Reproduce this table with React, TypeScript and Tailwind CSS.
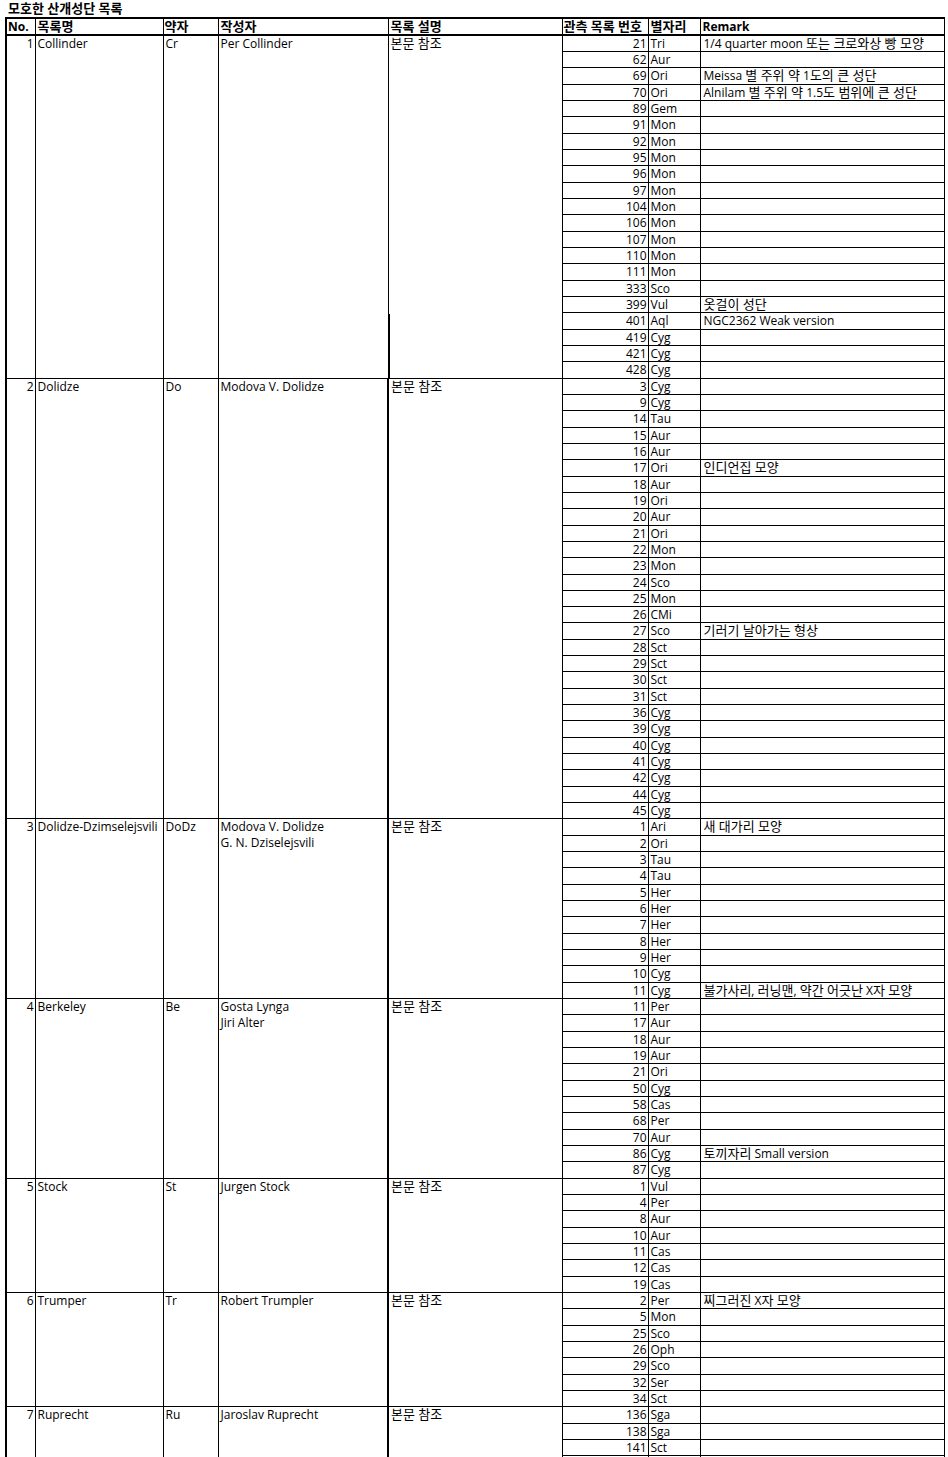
import { Fragment } from 'react'

const sections = [
  {
    no: 1,
    name: 'Collinder',
    abbr: 'Cr',
    authors: ['Per Collinder'],
    rows: [
      ['21', 'Tri', '1/4 quarter moon 또는 크로와상 빵 모양'],
      ['62', 'Aur'],
      ['69', 'Ori', 'Meissa 별 주위 약 1도의 큰 성단'],
      ['70', 'Ori', 'Alnilam 별 주위 약 1.5도 범위에 큰 성단'],
      ['89', 'Gem'],
      ['91', 'Mon'],
      ['92', 'Mon'],
      ['95', 'Mon'],
      ['96', 'Mon'],
      ['97', 'Mon'],
      ['104', 'Mon'],
      ['106', 'Mon'],
      ['107', 'Mon'],
      ['110', 'Mon'],
      ['111', 'Mon'],
      ['333', 'Sco'],
      ['399', 'Vul', '옷걸이 성단'],
      ['401', 'Aql', 'NGC2362 Weak version'],
      ['419', 'Cyg'],
      ['421', 'Cyg'],
      ['428', 'Cyg'],
    ],
  },
  {
    no: 2,
    name: 'Dolidze',
    abbr: 'Do',
    authors: ['Modova V. Dolidze'],
    rows: [
      ['3', 'Cyg'],
      ['9', 'Cyg'],
      ['14', 'Tau'],
      ['15', 'Aur'],
      ['16', 'Aur'],
      ['17', 'Ori', '인디언집 모양'],
      ['18', 'Aur'],
      ['19', 'Ori'],
      ['20', 'Aur'],
      ['21', 'Ori'],
      ['22', 'Mon'],
      ['23', 'Mon'],
      ['24', 'Sco'],
      ['25', 'Mon'],
      ['26', 'CMi'],
      ['27', 'Sco', '기러기 날아가는 형상'],
      ['28', 'Sct'],
      ['29', 'Sct'],
      ['30', 'Sct'],
      ['31', 'Sct'],
      ['36', 'Cyg'],
      ['39', 'Cyg'],
      ['40', 'Cyg'],
      ['41', 'Cyg'],
      ['42', 'Cyg'],
      ['44', 'Cyg'],
      ['45', 'Cyg'],
    ],
  },
  {
    no: 3,
    name: 'Dolidze-Dzimselejsvili',
    abbr: 'DoDz',
    authors: ['Modova V. Dolidze', 'G. N. Dziselejsvili'],
    rows: [
      ['1', 'Ari', '새 대가리 모양'],
      ['2', 'Ori'],
      ['3', 'Tau'],
      ['4', 'Tau'],
      ['5', 'Her'],
      ['6', 'Her'],
      ['7', 'Her'],
      ['8', 'Her'],
      ['9', 'Her'],
      ['10', 'Cyg'],
      ['11', 'Cyg', '불가사리, 러닝맨, 약간 어긋난 X자 모양'],
    ],
  },
  {
    no: 4,
    name: 'Berkeley',
    abbr: 'Be',
    authors: ['Gosta Lynga', 'Jiri Alter'],
    rows: [
      ['11', 'Per'],
      ['17', 'Aur'],
      ['18', 'Aur'],
      ['19', 'Aur'],
      ['21', 'Ori'],
      ['50', 'Cyg'],
      ['58', 'Cas'],
      ['68', 'Per'],
      ['70', 'Aur'],
      ['86', 'Cyg', '토끼자리 Small version'],
      ['87', 'Cyg'],
    ],
  },
  {
    no: 5,
    name: 'Stock',
    abbr: 'St',
    authors: ['Jurgen Stock'],
    rows: [
      ['1', 'Vul'],
      ['4', 'Per'],
      ['8', 'Aur'],
      ['10', 'Aur'],
      ['11', 'Cas'],
      ['12', 'Cas'],
      ['19', 'Cas'],
    ],
  },
  {
    no: 6,
    name: 'Trumper',
    abbr: 'Tr',
    authors: ['Robert Trumpler'],
    rows: [
      ['2', 'Per', '찌그러진 X자 모양'],
      ['5', 'Mon'],
      ['25', 'Sco'],
      ['26', 'Oph'],
      ['29', 'Sco'],
      ['32', 'Ser'],
      ['34', 'Sct'],
    ],
  },
  {
    no: 7,
    name: 'Ruprecht',
    abbr: 'Ru',
    authors: ['Jaroslav Ruprecht'],
    rows: [
      ['136', 'Sga'],
      ['138', 'Sga'],
      ['141', 'Sct'],
      ['', ''],
    ],
  },
]

// Hangul runs render a bit larger, like the spreadsheet's font
const K = ({ text }: { text: string }) => (
  <>
    {text.split(/([가-힣]+(?: [가-힣]+)*)/).map((part, i) =>
      /[가-힣]/.test(part) ? (
        <span key={i} className="text-[13px] leading-[15px]">{part}</span>
      ) : (
        <Fragment key={i}>{part}</Fragment>
      )
    )}
  </>
)

const cell = 'border border-black p-0 align-top'

export default function App() {
  return (
    <div className="bg-white text-black text-[12px] leading-[15px] font-['Open_Sans','Noto_Sans_CJK_KR',sans-serif] h-[1457px] overflow-hidden">
      <div className="pl-[8px] pt-[1px] h-[17px] text-[13px] leading-[15px] font-bold">
        모호한 산개성단 목록
      </div>
      <table className="ml-[5px] w-[938px] table-fixed border-collapse">
        <colgroup>
          <col className="w-[29px]" />
          <col className="w-[128px]" />
          <col className="w-[55px]" />
          <col className="w-[170px]" />
          <col className="w-[174px]" />
          <col className="w-[86px]" />
          <col className="w-[52px]" />
          <col className="w-[244px]" />
        </colgroup>
        <thead>
          <tr className="h-[16px] font-bold">
            <td className={`${cell} border-t-2 border-b-2 border-l-2 pl-[1px]`}>No.</td>
            <td className={`${cell} border-t-2 border-b-2 pl-[2px]`}><K text="목록명" /></td>
            <td className={`${cell} border-t-2 border-b-2 pl-[1px]`}><K text="약자" /></td>
            <td className={`${cell} border-t-2 border-b-2 pl-[2px]`}><K text="작성자" /></td>
            <td className={`${cell} border-t-2 border-b-2 pl-[2px]`}><K text="목록 설명" /></td>
            <td className={`${cell} border-t-2 border-b-2 pl-[1px] whitespace-nowrap`}><K text="관측 목록 번호" /></td>
            <td className={`${cell} border-t-2 border-b-2 pl-[2px]`}><K text="별자리" /></td>
            <td className={`${cell} border-t-2 border-b-2 pl-[2px]`}>Remark</td>
          </tr>
        </thead>
        <tbody>
          {sections.map((s) =>
            s.rows.map((r, i) => (
              <tr key={`${s.no}-${i}`} className="h-[16.33px]">
                {i === 0 && (
                  <>
                    <td rowSpan={s.rows.length} className={`${cell} border-l-2 text-right pr-[1px]`}>
                      {s.no}
                    </td>
                    <td rowSpan={s.rows.length} className={`${cell} pl-[2px] whitespace-nowrap`}>
                      {s.name}
                    </td>
                    <td rowSpan={s.rows.length} className={`${cell} pl-[2px]`}>
                      {s.abbr}
                    </td>
                    <td rowSpan={s.rows.length} className={`${cell} pl-[2px]`}>
                      {s.authors.map((a) => (
                        <div key={a} className="leading-[16px]">{a}</div>
                      ))}
                    </td>
                    <td
                      rowSpan={s.rows.length}
                      className={`${cell} pl-[2px] ${s.no === 1 ? 'relative' : 'border-l-2'}`}
                    >
                      <K text="본문 참조" />
                      {s.no === 1 && (
                        <span className="absolute left-[-1px] bottom-0 w-[2px] h-[64px] bg-black" />
                      )}
                    </td>
                  </>
                )}
                <td className={`${cell} text-right pr-[1px] align-middle`}>{r[0]}</td>
                <td className={`${cell} pl-[2px] align-middle`}>{r[1]}</td>
                <td className={`${cell} pl-[3px] align-middle whitespace-nowrap`}>
                  <K text={r[2] ?? ''} />
                </td>
              </tr>
            ))
          )}
        </tbody>
      </table>
    </div>
  )
}
